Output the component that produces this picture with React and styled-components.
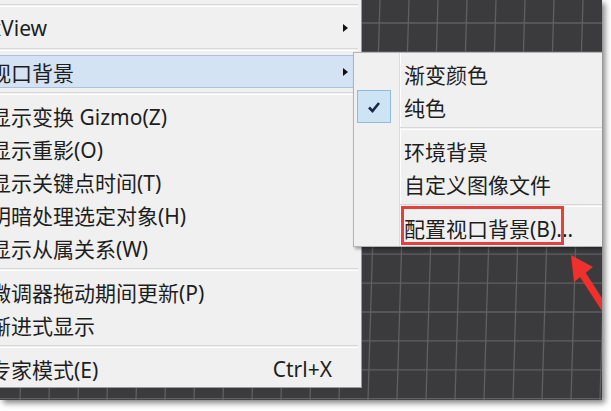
import React from "react";
import styled, { createGlobalStyle } from "styled-components";

const GlobalStyle = createGlobalStyle`
  html, body {
    margin: 0;
    padding: 0;
    background: #ffffff;
  }
  body {
    font-family: "Noto Sans", "Noto Sans CJK SC", sans-serif;
  }
`;

const mainItems = [
  { type: "sep" },
  { label: "xView", arrow: true },
  { type: "sep" },
  { label: "视口背景", arrow: true, active: true },
  { type: "sep" },
  { label: "显示变换 Gizmo(Z)" },
  { label: "显示重影(O)" },
  { label: "显示关键点时间(T)" },
  { label: "明暗处理选定对象(H)" },
  { label: "显示从属关系(W)" },
  { type: "sep" },
  { label: "微调器拖动期间更新(P)" },
  { label: "渐进式显示" },
  { type: "sep" },
  { label: "专家模式(E)", shortcut: "Ctrl+X" },
];

const subItems = [
  { label: "渐变颜色" },
  { label: "纯色", checked: true },
  { type: "sep" },
  { label: "环境背景" },
  { label: "自定义图像文件" },
  { type: "sep" },
  { label: "配置视口背景(B)..." },
];

const Page = styled.div`
  width: 611px;
  height: 411px;
  overflow: hidden;
  background: #ffffff;
`;

const Frame = styled.div`
  position: relative;
  width: 602px;
  height: 400px;
  overflow: hidden;
  background: #3b3a3d;
  box-shadow: 3px 3px 6px rgba(0, 0, 0, 0.5);
`;

const Viewport = styled.svg`
  display: block;
`;

const Menu = styled.div`
  position: absolute;
  left: -14px;
  top: 0;
  width: 374px;
  padding-bottom: 2px;
  background: #f0f0f0;
  border: 1px solid #9a9a9a;
  border-top: none;
  display: flex;
  flex-direction: column;
`;

const SubMenu = styled.div`
  position: absolute;
  left: 353px;
  top: 52px;
  width: 262px;
  padding: 4px 0 2px;
  border: 1px solid #b4b4b4;
  box-shadow: 2px 2px 3px rgba(0, 0, 0, 0.35);
  background: linear-gradient(
      to right,
      transparent 45px,
      #dcdcdc 45px,
      #dcdcdc 46px,
      #ffffff 46px,
      #ffffff 47px,
      transparent 47px
    ),
    #f0f0f0;
  display: flex;
  flex-direction: column;
`;

const Sep = styled.div`
  height: 11px;
  display: flex;
  align-items: center;
  margin: 0 3px 0 ${(p) => p.$indent || 0}px;

  &::after {
    content: "";
    flex: 1;
    height: 1px;
    border-top: 1px solid #d7d7d7;
    border-bottom: 1px solid #ffffff;
  }
`;

const Row = styled.div`
  height: 33px;
  box-sizing: border-box;
  display: flex;
  align-items: center;
  padding-left: 2px;
  margin: 0 2px 0 0;
  font-size: 21px;
  color: #1e1e1e;
  white-space: nowrap;
  border: 1px solid ${(p) => (p.$active ? "#a9c3dd" : "transparent")};
  border-radius: 3px;
  background: ${(p) => (p.$active ? "#d3e3f3" : "transparent")};
`;

const Label = styled.span`
  flex: 1;
`;

const Shortcut = styled.span`
  font-size: 21px;
`;

const ArrowCell = styled.span`
  width: 26px;
  display: flex;
  justify-content: center;
`;

const Arrow = styled.span`
  width: 0;
  height: 0;
  border-left: 5px solid #111;
  border-top: 4px solid transparent;
  border-bottom: 4px solid transparent;
`;

const SubRow = styled.div`
  height: 33px;
  display: flex;
  align-items: center;
  font-size: 21px;
  color: #1e1e1e;
  white-space: nowrap;
`;

const CheckCell = styled.span`
  width: 50px;
  height: 33px;
  display: flex;
  align-items: center;
  padding-left: 3px;
  box-sizing: border-box;
`;

const CheckBox = styled.span`
  width: 34px;
  height: 33px;
  box-sizing: border-box;
  display: flex;
  align-items: center;
  justify-content: center;
  background: #cde4f5;
  border: 1px solid #8fbbdd;
`;

const Highlight = styled.div`
  position: absolute;
  left: 401px;
  top: 206px;
  width: 163px;
  height: 39px;
  box-sizing: border-box;
  border: 3px solid #e4403c;
`;

const Pointer = styled.svg`
  position: absolute;
  left: 0;
  top: 0;
  pointer-events: none;
`;

function Grid() {
  const verticals = [];
  for (let k = -13; k <= 8; k++) {
    const x0 = 380 + 29 * k;
    verticals.push(
      <line key={"v" + k} x1={x0} y1={0} x2={x0 - 12} y2={400} />
    );
  }
  const horizontals = [];
  for (let k = 0; k <= 13; k++) {
    const y = 23 + 28.9 * k;
    horizontals.push(<line key={"h" + k} x1={0} y1={y} x2={602} y2={y} />);
  }
  return (
    <Viewport width="602" height="400">
      <g stroke="#605f62" strokeWidth="1.3">
        {verticals}
        {horizontals}
      </g>
    </Viewport>
  );
}

export default function App() {
  return (
    <Page>
      <GlobalStyle />
      <Frame>
        <Grid />
        <Menu>
          {mainItems.map((it, i) =>
            it.type === "sep" ? (
              <Sep key={i} />
            ) : (
              <Row key={i} $active={it.active}>
                <Label>{it.label}</Label>
                {it.shortcut && <Shortcut>{it.shortcut}</Shortcut>}
                <ArrowCell>{it.arrow && <Arrow />}</ArrowCell>
              </Row>
            )
          )}
        </Menu>
        <SubMenu>
          {subItems.map((it, i) =>
            it.type === "sep" ? (
              <Sep key={i} $indent={46} />
            ) : (
              <SubRow key={i}>
                <CheckCell>
                  {it.checked && (
                    <CheckBox>
                      <svg width="14" height="12" viewBox="0 0 14 12">
                        <path
                          d="M2 6.5 L5.5 10 L12 2"
                          fill="none"
                          stroke="#1b2a44"
                          strokeWidth="2.6"
                        />
                      </svg>
                    </CheckBox>
                  )}
                </CheckCell>
                <span>{it.label}</span>
              </SubRow>
            )
          )}
        </SubMenu>
        <Highlight />
        <Pointer width="602" height="400">
          <line
            x1="581"
            y1="272"
            x2="612"
            y2="320"
            stroke="#ef302d"
            strokeWidth="7"
          />
          <polygon points="571,255 593,267 574,282" fill="#ef302d" />
        </Pointer>
      </Frame>
    </Page>
  );
}
